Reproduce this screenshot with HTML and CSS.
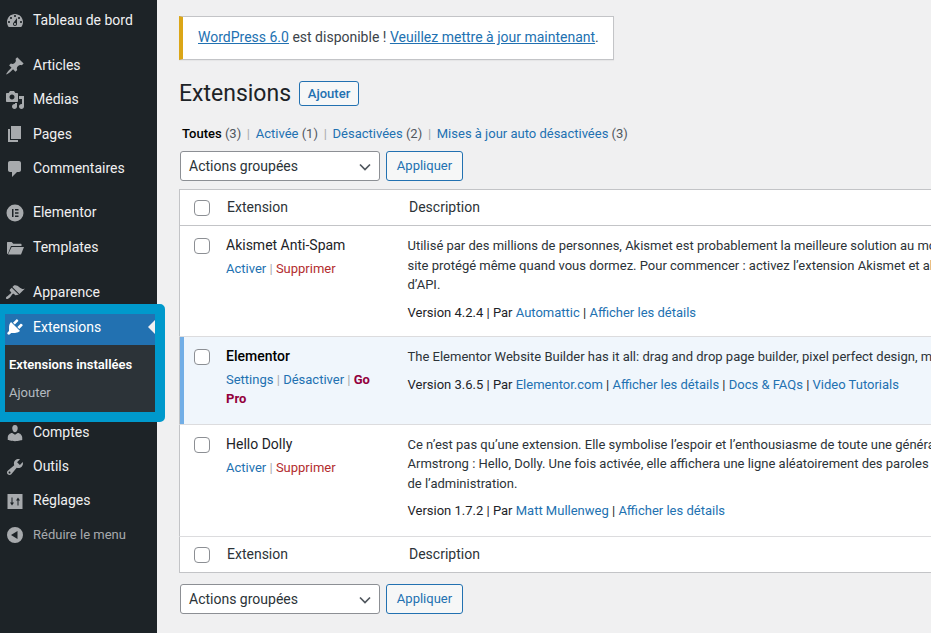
FILE: index.html
```html
<!DOCTYPE html>
<html lang="fr">
<head>
<meta charset="utf-8">
<title>Extensions</title>
<link rel="stylesheet" href="styles.css">
</head>
<body>
<div class="layout">
<nav class="sidebar">
<ul class="menu">
<li class="item sep"><svg class="ico" viewBox="0 0 20 20"><path d="M3.76 16h12.48c1.1-1.37 1.76-3.11 1.76-5 0-4.42-3.58-8-8-8s-8 3.58-8 8c0 1.89.66 3.63 1.76 5zM10 4c.55 0 1 .45 1 1s-.45 1-1 1-1-.45-1-1 .45-1 1-1zM6 6c.55 0 1 .45 1 1s-.45 1-1 1-1-.45-1-1 .45-1 1-1zm8 0c.55 0 1 .45 1 1s-.45 1-1 1-1-.45-1-1 .45-1 1-1zm-5.37 5.55L12 7v6c0 1.1-.9 2-2 2s-2-.9-2-2c0-.57.24-1.08.63-1.45zM4 10c.55 0 1 .45 1 1s-.45 1-1 1-1-.45-1-1 .45-1 1-1zm12 0c.55 0 1 .45 1 1s-.45 1-1 1-1-.45-1-1 .45-1 1-1zm-5 3c0-.55-.45-1-1-1s-1 .45-1 1 .45 1 1 1 1-.45 1-1z"/></svg>Tableau de bord</li>
<li class="item"><svg class="ico" viewBox="0 0 20 20"><path d="M10.44 3.02l1.82-1.82 6.36 6.35-1.83 1.82c-1.05-.68-2.48-.57-3.41.36l-.75.75c-.92.93-1.04 2.35-.35 3.41l-1.83 1.82-2.41-2.41-2.8 2.79c-.42.42-3.38 2.71-3.8 2.29s1.86-3.39 2.28-3.81l2.79-2.79L4.1 9.36l1.83-1.82c1.05.69 2.48.57 3.4-.36l.75-.75c.93-.92 1.05-2.35.36-3.41z"/></svg>Articles</li>
<li class="item"><svg class="ico" viewBox="0 0 20 20"><path d="M13 11V4c0-.55-.45-1-1-1h-1.67L9 1H5L3.67 3H2c-.55 0-1 .45-1 1v7c0 .55.45 1 1 1h10c.55 0 1-.45 1-1zM7 4.500c1.380 0 2.500 1.120 2.500 2.500S8.380 9.500 7 9.500 4.500 8.380 4.500 7 5.620 4.500 7 4.500zM14 6h5v10.500c0 1.380-1.120 2.500-2.500 2.500S14 17.880 14 16.500s1.120-2.500 2.500-2.500c.17 0 .34.02.5.05V9h-3V6zm-4 8.050V13h2v3.500c0 1.380-1.120 2.500-2.500 2.500S7 17.880 7 16.500 8.120 14 9.500 14c.17 0 .34.02.5.05z"/></svg>Médias</li>
<li class="item"><svg class="ico" viewBox="0 0 20 20"><path d="M6 15V2h10v13H6zm-1 1h8v2H3V5h2v11z"/></svg>Pages</li>
<li class="item sep"><svg class="ico" viewBox="0 0 20 20"><path d="M5 2h9c1.100 0 2 .9 2 2v7c0 1.100-.9 2-2 2h-2l-5 5v-5H5c-1.100 0-2-.9-2-2V4c0-1.100.9-2 2-2z"/></svg>Commentaires</li>
<li class="item"><svg class="ico" viewBox="0 0 20 20"><path fill-rule="evenodd" d="M10 1.500a8.500 8.500 0 1 0 0 17 8.500 8.500 0 0 0 0-17zM7 6h1.500v8H7zm3 0h3.500v1.500H10zm0 3.250h3.500v1.500H10zm0 3.250h3.500V14H10z"/></svg>Elementor</li>
<li class="item sep wide"><svg class="ico" viewBox="0 0 20 20"><path d="M2 16V4.500c0-.3.2-.5.5-.5h4.200l1.600 1.800H16c.3 0 .5.2.5.5V8H6L3 15.500zM6.600 9H19l-3 7.500H3z"/></svg>Templates</li>
<li class="item"><svg class="ico" viewBox="0 0 20 20"><path d="M14.480 11.060L7.410 3.990l1.500-1.500c.5-.56 2.300-.47 3.510.32 1.210.8 1.430 1.280 2.910 2.100 1.180.64 2.450 1.260 4.450.85zm-.71.71L6.700 4.700 4.930 6.470c-.39.39-.39 1.020 0 1.410l1.060 1.060c.39.39.39 1.030 0 1.420-.6.6-1.430 1.110-2.210 1.690-.35.26-.7.53-1.010.84C1.430 13.230.4 14.950 1.210 15.760c.81.81 2.530-.22 3.880-1.570.31-.31.58-.66.84-1.010.58-.78 1.090-1.610 1.690-2.210.39-.39 1.020-.39 1.410 0l1.060 1.060c.39.39 1.020.39 1.410 0z"/></svg>Apparence</li>
<li class="current">
<div class="item active"><svg class="ico" viewBox="0 0 20 20"><path d="M13.110 4.360L9.870 7.600 8 5.730l3.240-3.240c.35-.34 1.050-.2 1.560.32.52.51.66 1.210.31 1.550zm-8 1.770l.91-1.120 9.010 9.010-1.190.84c-.71.71-2.630 1.160-3.820 1.160H6.140L4.900 17.260c-.59.59-1.540.59-2.120 0-.59-.58-.59-1.530 0-2.120l1.240-1.240v-3.880c0-1.130.4-3.190 1.090-3.890zm7.260 3.970l3.240-3.240c.34-.35 1.040-.21 1.550.31.52.51.66 1.210.31 1.550l-3.240 3.250z"/></svg>Extensions</div>
<ul class="submenu">
<li class="sub strong">Extensions installées</li>
<li class="sub">Ajouter</li>
</ul>
</li>
<li class="item"><svg class="ico" viewBox="0 0 20 20"><path d="M10 9.250c-2.270 0-2.730-3.440-2.730-3.440C7 4.020 7.820 2 9.970 2c2.160 0 2.980 2.020 2.710 3.810 0 0-.41 3.440-2.680 3.440zm0 2.570L12.720 10c2.390 0 4.520 2.330 4.520 4.530v2.490s-3.650 1.130-7.240 1.130c-3.650 0-7.240-1.130-7.240-1.130v-2.490c0-2.250 1.940-4.480 4.470-4.480z"/></svg>Comptes</li>
<li class="item"><svg class="ico" viewBox="0 0 20 20"><path d="M16.680 9.770c-1.340 1.340-3.300 1.670-4.950.99l-5.410 6.520c-.99.99-2.590.99-3.580 0s-.99-2.590 0-3.570l6.520-5.420c-.68-1.650-.35-3.610.99-4.950 1.280-1.280 3.120-1.620 4.720-1.060l-2.890 2.890 2.820 2.820 2.860-2.870c.53 1.580.18 3.390-1.080 4.650zM3.810 16.210c.4.39 1.040.39 1.430 0 .4-.4.4-1.040 0-1.430-.39-.4-1.030-.4-1.430 0-.39.39-.39 1.030 0 1.430z"/></svg>Outils</li>
<li class="item"><svg class="ico" viewBox="0 0 20 20"><path fill-rule="evenodd" d="M2.500 3h15v15h-15zM6.500 6.500v5H5l2 3 2-3H7.500v-5zm6 8v-5H11l2-3 2 3h-1.500v5z"/></svg>Réglages</li>
<li class="item collapse"><svg class="ico" viewBox="0 0 20 20"><path fill-rule="evenodd" d="M10 2a8 8 0 1 1 0 16 8 8 0 0 1 0-16zm2.500 4L6 10l6.500 4z"/></svg>Réduire le menu</li>
</ul>
</nav>
<main class="content">
<div class="notice"><a href="#">WordPress 6.0</a> est disponible ! <a href="#">Veuillez mettre à jour maintenant</a>.</div>
<div class="heading"><h1>Extensions</h1><span class="btn add">Ajouter</span></div>
<ul class="filters">
<li><b>Toutes</b> <span class="count">(3)</span><i>|</i></li>
<li><span class="link">Activée</span> <span class="count">(1)</span><i>|</i></li>
<li><span class="link">Désactivées</span> <span class="count">(2)</span><i>|</i></li>
<li><span class="link">Mises à jour auto désactivées</span> <span class="count">(3)</span></li>
</ul>
<div class="bulk"><div class="select">Actions groupées<svg class="caret" viewBox="0 0 12 8"><path d="M1 1.500l5 5 5-5"/></svg></div><span class="btn">Appliquer</span></div>
<table class="plugins">
<colgroup><col class="c1"><col class="c2"><col class="c3"></colgroup>
<thead><tr><td class="chk head-chk"><span class="box"></span></td><th>Extension</th><th>Description</th></tr></thead>
<tbody>
<tr class="r1">
<td class="chk"><span class="box"></span></td>
<td class="plugin"><div class="name">Akismet Anti-Spam</div><div class="actions"><span class="link">Activer</span> <i>|</i> <span class="del">Supprimer</span></div></td>
<td class="desc"><p>Utilisé par des millions de personnes, Akismet est probablement la meilleure solution au monde pour protéger votre blog du spam. Akismet conserve votre<br>site protégé même quand vous dormez. Pour commencer : activez l’extension Akismet et allez sur la page des réglages pour configurer votre clé<br>d’API.</p><p class="ver">Version 4.2.4 | Par <span class="link">Automattic</span> | <span class="link">Afficher les détails</span></p></td>
</tr>
<tr class="r2 on">
<td class="chk"><span class="box"></span></td>
<td class="plugin"><div class="name"><b>Elementor</b></div><div class="actions"><span class="link">Settings</span> <i>|</i> <span class="link">Désactiver</span> <i>|</i> <b class="pro">Go Pro</b></div></td>
<td class="desc"><p>The Elementor Website Builder has it all: drag and drop page builder, pixel perfect design, mobile responsive editing, and more. Get started now!</p><p class="ver">Version 3.6.5 | Par <span class="link">Elementor.com</span> | <span class="link">Afficher les détails</span> | <span class="link">Docs &amp; FAQs</span> | <span class="link">Video Tutorials</span></p></td>
</tr>
<tr class="r3">
<td class="chk"><span class="box"></span></td>
<td class="plugin"><div class="name">Hello Dolly</div><div class="actions"><span class="link">Activer</span> <i>|</i> <span class="del">Supprimer</span></div></td>
<td class="desc"><p>Ce n’est pas qu’une extension. Elle symbolise l’espoir et l’enthousiasme de toute une génération, résumés en quelques mots chantés par Louis<br>Armstrong : Hello, Dolly. Une fois activée, elle affichera une ligne aléatoirement des paroles de Hello, Dolly en haut à droite de chaque page<br>de l’administration.</p><p class="ver">Version 1.7.2 | Par <span class="link">Matt Mullenweg</span> | <span class="link">Afficher les détails</span></p></td>
</tr>
</tbody>
<tfoot><tr><td class="chk head-chk"><span class="box"></span></td><th>Extension</th><th>Description</th></tr></tfoot>
</table>
<div class="bulk bottom"><div class="select">Actions groupées<svg class="caret" viewBox="0 0 12 8"><path d="M1 1.500l5 5 5-5"/></svg></div><span class="btn">Appliquer</span></div>
</main>
</div>
</body>
</html>
```
FILE: styles.css
```css
* { box-sizing: border-box; }
html, body { margin: 0; height: 100%; overflow: hidden; }
body { background: #f0f0f1; color: #3c434a; font: 13px/1.4 Roboto, sans-serif; }
ul { list-style: none; margin: 0; padding: 0; }
.layout { display: flex; height: 633px; width: 1400px; }
.sidebar { width: 157px; flex: none; background: #1d2327; color: #f0f0f1; padding-top: 4px; }
.item { display: flex; align-items: center; height: 34.4px; font-size: 14px; }
.item.sep { margin-bottom: 10px; }
.item.wide { margin-bottom: 11px; }
.ico { width: 20px; height: 20px; fill: #a7aaad; margin: 0 8px 0 5px; flex: none; }
.current { position: relative; }
.current::after { content: ""; box-sizing: border-box; position: absolute; top: -6px; bottom: -7px; left: -5px; width: 170px; border: 10px solid #0099cc; border-radius: 5px; pointer-events: none; z-index: 1; }
.active { background: #2271b1; color: #fff; height: 34.4px; position: relative; }
.active .ico { fill: #fff; }
.active::after { content: ""; position: absolute; right: 2px; top: 10px; border: 7px solid transparent; border-right-color: #f0f0f1; border-left-width: 0; }
.submenu { background: #2c3338; padding: 11px 0 0; height: 70.800px; }
.sub { color: rgba(240,246,252,.7); font-size: 13px; line-height: 18px; padding: 0 0 10px 9px; }
.sub.strong { color: #fff; font-weight: 600; }
.collapse { color: #a7aaad; font-size: 13px; margin-top: -1px; }
.content { flex: 1; padding: 16px 0 0 23px; min-width: 0; }
.notice { width: 435px; height: 44px; margin-left: -1px; background: #fff; border: 1px solid #c3c4c7; border-left: 4px solid #dba617; padding: 0 0 0 15px; display: flex; align-items: center; white-space: pre; font-size: 14px; box-shadow: 0 1px 1px rgba(0,0,0,.04); }
.notice a { color: #2271b1; }
.heading { display: flex; align-items: center; margin-top: 19px; }
h1 { font-size: 23px; font-weight: 400; color: #1d2327; line-height: 1.3; margin: 0 8px 0 -1px; }
.btn { display: inline-flex; align-items: center; justify-content: center; height: 30px; width: 77px; border: 1px solid #2271b1; border-radius: 3px; background: #f6f7f7; color: #2271b1; font-size: 13px; }
.btn.add { width: 60px; height: 25px; font-weight: 500; margin-left: 0; }
.filters { display: flex; margin: 15px 0 0 2px; height: 19px; color: #50575e; font-size: 13px; line-height: 19px; }
.filters b { color: #000; font-weight: 500; }
.filters i { font-style: normal; color: #a7aaad; margin: 0 5.700px; }
.link { color: #2271b1; }
.count { color: #50575e; }
.bulk { display: flex; gap: 6px; margin-top: 8px; }
.select { position: relative; width: 200px; height: 30px; background: #fff; border: 1px solid #8c8f94; border-radius: 3px; color: #2c3338; font-size: 14px; line-height: 28px; padding-left: 8px; }
.caret { position: absolute; right: 8px; top: 11px; width: 12px; height: 8px; fill: none; stroke: #50575e; stroke-width: 1.700; }
.plugins { margin-top: 8px; margin-left: -1px; width: 1200px; border-collapse: collapse; table-layout: fixed; background: #fff; border: 1px solid #c3c4c7; }
.c1 { width: 46px; }
.c2 { width: 182px; }
thead tr { height: 36px; border-bottom: 1px solid #c3c4c7; }
tfoot tr { height: 36px; border-top: 1px solid #c3c4c7; }
th { font-weight: 400; font-size: 14px; color: #2c3338; text-align: left; padding: 0 0 0 1.500px; }
td { vertical-align: top; padding: 0; }
.plugin { padding-left: .5px; }
.head-chk { vertical-align: middle; }
.box { display: block; width: 16px; height: 16px; margin: 12px 0 0 14px; background: #fff; border: 1px solid #8c8f94; border-radius: 4px; }
.head-chk .box { margin-top: 2px; }
tbody tr { border-bottom: 1px solid #dcdcde; }
.r1 { height: 111px; }
.r2 { height: 88px; }
.r3 { height: 112px; }
.on { background: #f0f6fc; }
.on .chk { box-shadow: inset 4px 0 0 #72aee6; }
.name { font-size: 14px; color: #1d2327; margin-top: 9px; line-height: 20px; }
.name b { font-weight: 500; color: #000; }
.actions { margin-top: 4px; line-height: 19px; font-size: 13px; padding-right: 16px; }
.actions i { font-style: normal; color: #a7aaad; }
.del { color: #b32d2e; }
.pro { color: #93003c; font-weight: 700; }
.desc { padding: 10.300px 0 0 0; white-space: nowrap; color: #2c3338; }
.r2 .desc { padding-top: 10px; }
.r3 .desc { padding-top: 9.800px; }
.desc p { margin: 0; line-height: 19.500px; }
.desc .ver { margin-top: 8.500px; color: #1d2327; }
.r2 .desc .ver { margin-top: 9px; }
.r3 .desc .ver { margin-top: 8px; }
.bottom { margin-top: 11px; }
```
